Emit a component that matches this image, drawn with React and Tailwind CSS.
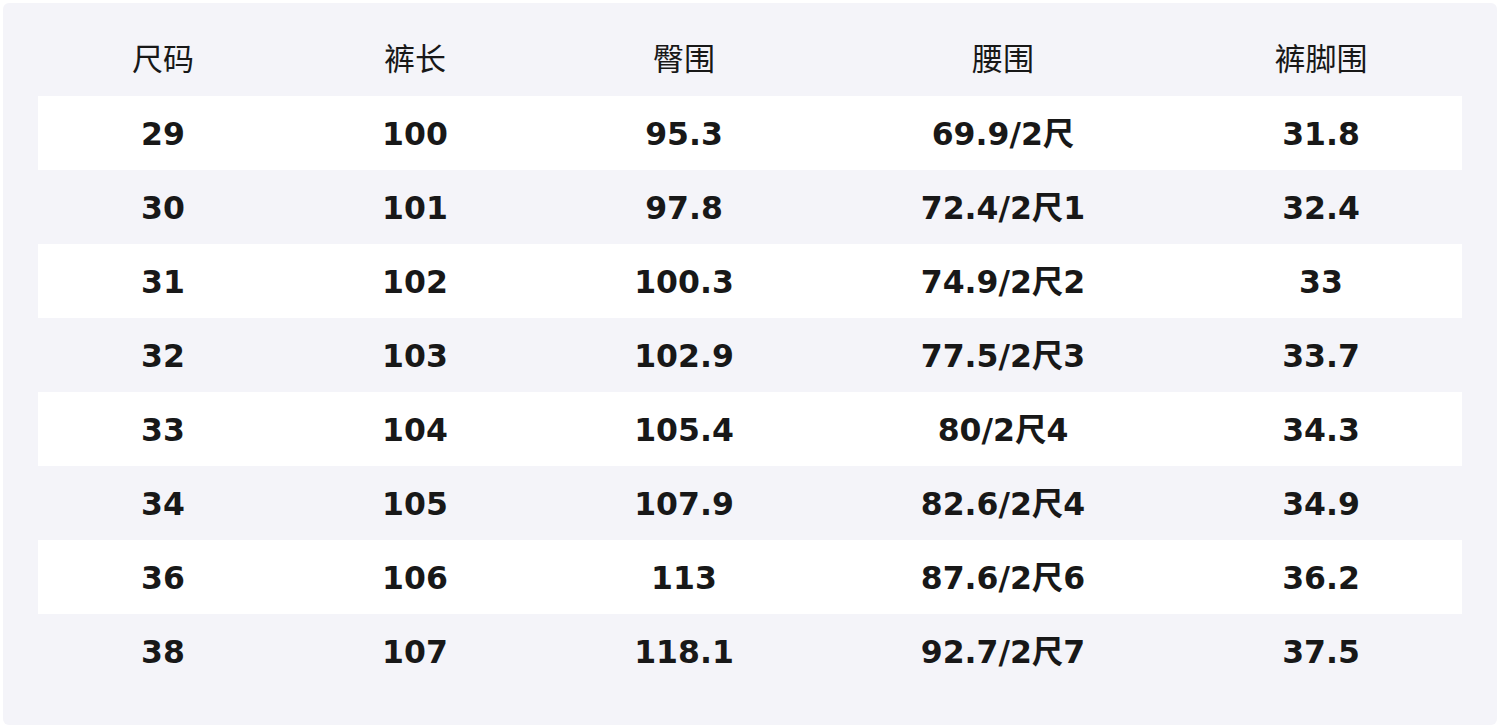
import React from "react";

const headers = ["尺码", "裤长", "臀围", "腰围", "裤脚围"];

const rows = [
  ["29", "100", "95.3", "69.9/2尺", "31.8"],
  ["30", "101", "97.8", "72.4/2尺1", "32.4"],
  ["31", "102", "100.3", "74.9/2尺2", "33"],
  ["32", "103", "102.9", "77.5/2尺3", "33.7"],
  ["33", "104", "105.4", "80/2尺4", "34.3"],
  ["34", "105", "107.9", "82.6/2尺4", "34.9"],
  ["36", "106", "113", "87.6/2尺6", "36.2"],
  ["38", "107", "118.1", "92.7/2尺7", "37.5"],
];

const cols = "grid grid-cols-[250px_254px_284px_354px_282px]";

export default function App() {
  return (
    <div className="w-[1500px] h-[728px] bg-white p-[3px]">
      <div
        className="h-[722px] rounded-md bg-[#f4f4f9] px-[35px] pt-[19px] text-[#181818]"
        style={{ fontFamily: '"DejaVu Sans", "Noto Sans CJK SC", sans-serif' }}
      >
        <div className={`${cols} h-[74px] items-center text-[31px]`}>
          {headers.map((h) => (
            <div key={h} className="text-center">
              {h}
            </div>
          ))}
        </div>
        {rows.map((r, i) => (
          <div
            key={r[0]}
            className={`${cols} h-[74px] items-center pt-[4px] text-[31.5px] font-bold ${
              i % 2 === 0 ? "bg-white" : ""
            }`}
          >
            {r.map((c, j) => (
              <div key={j} className="text-center">
                {c}
              </div>
            ))}
          </div>
        ))}
      </div>
    </div>
  );
}
